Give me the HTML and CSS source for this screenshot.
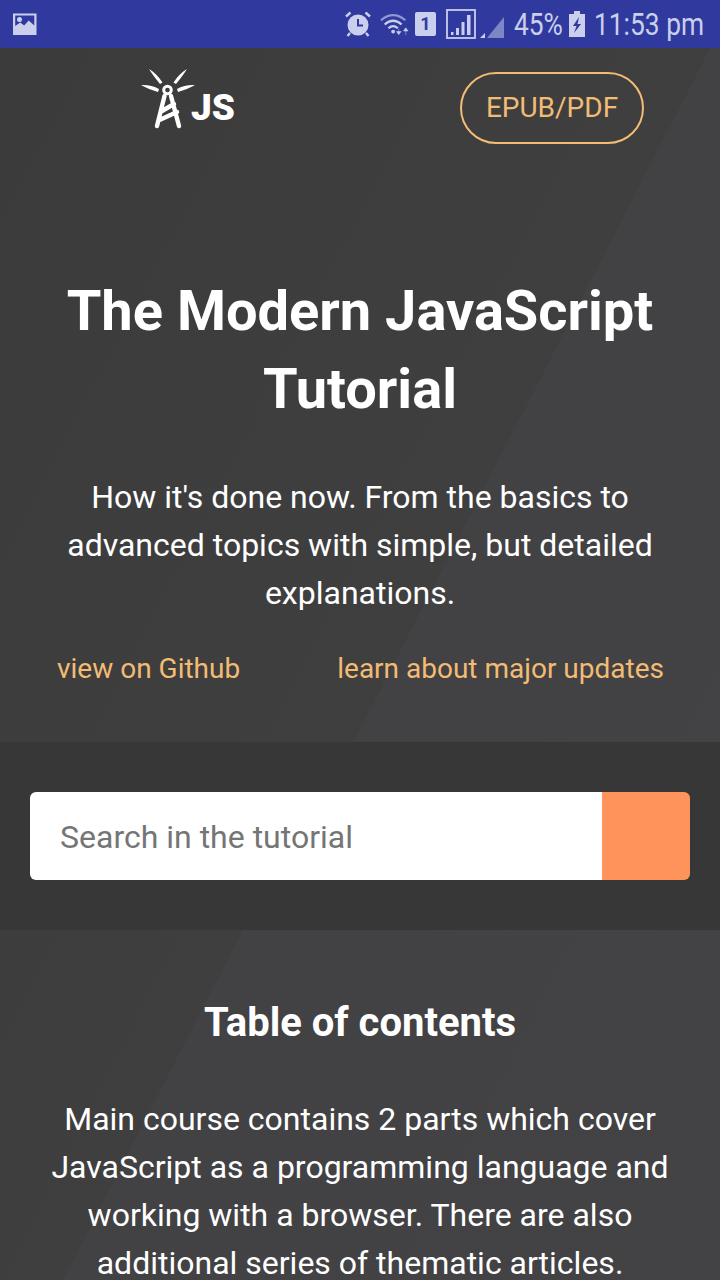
FILE: index.html
```html
<!DOCTYPE html>
<html lang="en">
<head>
  <meta charset="UTF-8" />
  <title>The Modern JavaScript Tutorial</title>
  <link rel="stylesheet" href="styles.css">
</head>
<body>

  <!-- Android status bar -->
  <div class="status-bar">
    <svg class="icon-picture" width="26" height="24" viewBox="0 0 26 24">
      <path fill="#c9cfec" fill-rule="evenodd" d="M1 1.500h23.500v21.500H1z M3.200 3.600v10.500l5-3.700 4 3 4.500-4.800 5.600 5V3.600z"/>
      <circle cx="7.500" cy="7.500" r="2.500" fill="#c9cfec"/>
    </svg>
    <div class="status-right">
      <svg class="icon-alarm" width="28" height="28" viewBox="0 0 28 28">
        <circle cx="14" cy="15" r="10.500" fill="#c9cfec"/>
        <path d="M14 9v6.500h5" fill="none" stroke="#303a9e" stroke-width="2"/>
        <path d="M2 6.500 6.500 2.500M26 6.500 21.500 2.500M6 23l-2.500 3M22 23l2.500 3" stroke="#c9cfec" stroke-width="2.400"/>
      </svg>
      <svg class="icon-wifi" width="30" height="28" viewBox="0 0 32 28">
        <path d="M1 10Q14-1 27 10" fill="none" stroke="#8f98d0" stroke-width="2.400"/>
        <path d="M5 14.500Q14 6.500 23 14.500M9 18.500Q14 14 19 18.500" fill="none" stroke="#c9cfec" stroke-width="2.400"/>
        <circle cx="14" cy="22" r="2" fill="#c9cfec"/>
        <path d="M20 19v4M17.500 22h5l-2.500 3.500zM27.500 26v-5M25 21.500h5l-2.500-3.500z" fill="#c9cfec" stroke="#c9cfec" stroke-width="0.500"/>
      </svg>
      <span class="sim-badge">1</span>
      <svg class="icon-signal" width="30" height="30" viewBox="0 0 30 30">
        <rect x="1" y="1" width="28" height="28" fill="none" stroke="#c9cfec" stroke-width="1.800"/>
        <path d="M5 26v-3h2.500v3zM10 26v-7h3v7zM15.500 26V13h3v13zM21 26V6h3.500v20z" fill="#c9cfec"/>
      </svg>
      <svg class="icon-cell" width="24" height="28" viewBox="0 0 24 28">
        <path d="M7 28 24 7v21z" fill="#7d87c6"/>
        <path d="M0 28l5-5v5z" fill="#c9cfec"/>
      </svg>
      <span class="status-text percent">45%</span>
      <svg class="icon-battery" width="16" height="26" viewBox="0 0 16 26">
        <path d="M5 0h6v3h5v23H0V3h5z" fill="#c9cfec"/>
        <path d="M10 6 4 15h3.500L5 22l7-9H8.500z" fill="#303a9e"/>
      </svg>
      <span class="status-text clock">11:53 pm</span>
    </div>
  </div>

  <div class="page">

    <div class="top-nav">
      <div class="logo">
        <svg width="54" height="62" viewBox="0 0 54 62">
          <path d="M8 1C13 4 18 9 21.500 14.500L19 16C15 11 11 6 8 1zM46 1C41 4 36 9 32.500 14.500L35 16C39 11 43 6 46 1zM0 17C6 16.500 13 18 18 21L17 24C11 22 5 20 0 17zM54 17C48 16.500 41 18 36 21L37 24C43 22 49 20 54 17z" fill="#fff"/>
          <circle cx="26.500" cy="22" r="3.800" fill="none" stroke="#fff" stroke-width="3"/>
          <path d="M23.500 28 16 58M30 28 38 58M21 43 33 36M18.500 52 36 44" fill="none" stroke="#fff" stroke-width="4.400" stroke-linecap="round"/>
        </svg>
        <span class="logo-text">JS</span>
      </div>
      <a class="pdf-btn" href="#">EPUB/PDF</a>
    </div>

    <div class="hero">
      <h1>The Modern JavaScript Tutorial</h1>
      <p>How it's done now. From the basics to advanced topics with simple, but detailed explanations.</p>
      <div class="hero-links">
        <a href="#">view on Github</a>
        <a href="#">learn about major updates</a>
      </div>
    </div>

    <div class="search-band">
      <form class="search-form">
        <input type="text" placeholder="Search in the tutorial" />
        <button type="button" aria-label="Search"></button>
      </form>
    </div>

    <div class="toc">
      <h2>Table of contents</h2>
      <p>Main course contains 2 parts which cover JavaScript as a programming language and working with a browser. There are also additional series of thematic articles.</p>
    </div>

  </div>

</body>
</html>
```

FILE: styles.css
```css
* {
  box-sizing: border-box;
}

html, body {
  margin: 0;
  height: 1280px;
  overflow: hidden;
}

body {
  font-family: Roboto, "Noto Sans", sans-serif;
  background: #3e3d3e;
  color: #fff;
}

a {
  text-decoration: none;
  color: #f2bc74;
}

.status-bar {
  height: 48px;
  background: #303a9e;
  display: flex;
  align-items: center;
  justify-content: space-between;
  padding: 0 16px 0 12px;
  color: #c9cfec;
}

.status-right {
  display: flex;
  align-items: center;
}

.status-text {
  font-size: 31px;
  white-space: nowrap;
  transform: scaleX(0.85);
  transform-origin: left center;
}

.percent {
  width: 48px;
  margin-left: 10px;
}

.clock {
  width: 110px;
  margin-left: 9px;
}

.icon-wifi {
  margin-left: 8px;
}

.sim-badge {
  width: 21px;
  height: 24px;
  margin-left: 5px;
  background: #c9cfec;
  color: #303a9e;
  border-radius: 2px;
  font-size: 18px;
  font-weight: 700;
  text-align: center;
  line-height: 24px;
}

.icon-signal {
  margin-left: 10px;
}

.icon-cell {
  margin-left: 4px;
}

.icon-battery {
  margin-left: 7px;
}

.page {
  height: 1232px;
  background: linear-gradient(117.2deg, #3c3b3c 0%, #403f40 52.5%, #424143 52.5%, #434244 100%);
}

.top-nav {
  height: 96px;
  padding: 24px 76px 0 141px;
  display: flex;
  justify-content: space-between;
  align-items: flex-start;
}

.logo {
  display: flex;
  align-items: flex-end;
  margin-top: -4px;
}

.logo-text {
  font-size: 37px;
  font-weight: 900;
  line-height: 44px;
  margin-left: -4px;
}

.pdf-btn {
  width: 184px;
  height: 72px;
  border: 2px solid #f2bc74;
  border-radius: 36px;
  display: flex;
  align-items: center;
  justify-content: center;
  padding-bottom: 2px;
  font-size: 28px;
}

.hero {
  text-align: center;
  padding: 128px 30px 0;
}

.hero h1 {
  margin: 0;
  font-size: 56px;
  font-weight: 700;
  line-height: 78px;
}

.hero p {
  margin: 45px 0 0;
  font-size: 32px;
  line-height: 48px;
}

.hero-links {
  display: flex;
  justify-content: space-between;
  padding: 0 26px 0 27px;
  margin-top: 28px;
  font-size: 28px;
  line-height: 48px;
}

.search-band {
  margin-top: 49px;
  height: 188px;
  background: #383738;
  padding: 50px 30px 0;
}

.search-form {
  display: flex;
  height: 88px;
  border-radius: 6px;
  overflow: hidden;
}

.search-form input {
  flex: 1;
  min-width: 0;
  border: none;
  outline: none;
  background: #fff;
  padding: 2px 30px 0;
  font-family: inherit;
  font-size: 32px;
}

.search-form input::placeholder {
  color: #757575;
}

.search-form button {
  width: 88px;
  border: none;
  background: #ff935c;
}

/* the stripe restarts a bit further left below the search band */
.toc {
  height: 350px;
  text-align: center;
  padding: 65px 30px 0;
  background: linear-gradient(117.2deg, #3e3d3e 0%, #403f40 27%, #424143 27%, #434244 100%);
}

.toc h2 {
  margin: 0;
  font-size: 40px;
  font-weight: 700;
  line-height: 56px;
}

.toc p {
  margin: 44px 0 0;
  font-size: 32px;
  line-height: 48px;
}
```
